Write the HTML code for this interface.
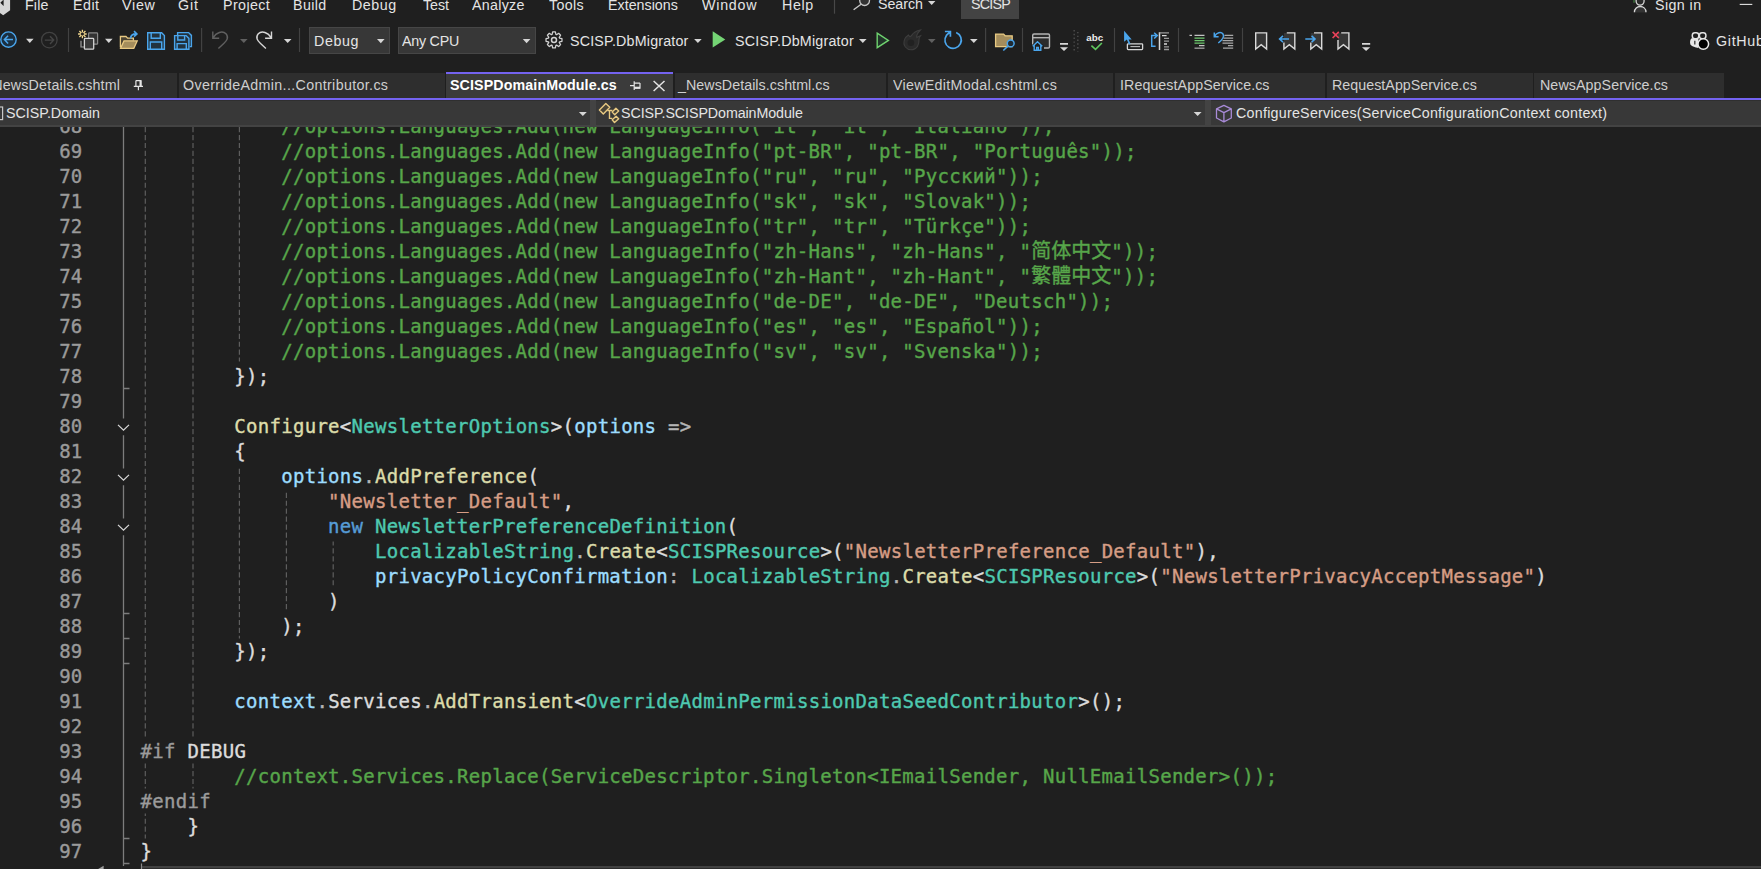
<!DOCTYPE html>
<html lang="en">
<head>
<meta charset="utf-8">
<title>SCISP - SCISPDomainModule.cs</title>
<style>
html,body{margin:0;padding:0;}
body{width:1761px;height:869px;overflow:hidden;background:#1f1f1f;position:relative;
  font-family:"Liberation Sans","Noto Sans CJK SC",sans-serif;font-size:14.5px;color:#e6e6e6;}
/* ---------- editor ---------- */
#editor{position:absolute;left:0;top:127px;width:1761px;height:742px;overflow:hidden;background:#1f1f1f;}
#nums,#code{position:absolute;top:-38.5px;font-family:"DejaVu Sans Mono","Liberation Mono","Noto Sans CJK SC",monospace;
  font-size:19px;letter-spacing:0.28px;-webkit-text-stroke:0.38px;}
#nums{left:0;width:82.6px;text-align:right;color:#9a9a9a;}
#code{left:140.6px;color:#dcdcdc;}
.ln{height:25px;line-height:25px;white-space:pre;}
.c{color:#57a64a}.p{color:#dcdcdc}.o{color:#b4b4b4}.m{color:#dcdcaa}.t{color:#4ec9b0}
.v{color:#9cdcfe}.s{color:#d69d85}.k{color:#569cd6}.i{color:#dcdcdc}.d{color:#9b9b9b}
.cjk{font-family:"Noto Sans CJK SC",sans-serif;font-size:20px;letter-spacing:0;line-height:0;}

/* ---------- top chrome ---------- */
.u{position:absolute;white-space:nowrap;line-height:20px;height:20px;font-size:15.5px;color:#e4e4e4;transform:scaleX(0.92);transform-origin:0 0;}
.tabtx{color:#cfcfcf;}
.tabact{color:#ffffff;font-weight:bold;}
.box{position:absolute;}
#menusel{left:961px;top:0;width:58px;height:18.7px;background:#434343;}
.combo{position:absolute;top:27px;height:24.8px;background:#373737;border:1px solid #464646;box-sizing:content-box;}
#tabrow{position:absolute;left:0;top:73px;width:1761px;height:25px;}
.tab{position:absolute;top:0;height:25px;background:#2e2e2e;}
.tab.act{background:#3b3b3b;top:-1px;height:26px;border-top:2px solid #7463f0;box-sizing:border-box;}
#purple{position:absolute;left:0;top:97.6px;width:1761px;height:2.8px;background:#7463f0;}
#navbar{position:absolute;left:0;top:100.2px;width:1761px;height:26.7px;background:#434343;}
.nav{position:absolute;top:0;height:24.6px;background:#383838;border-top:0.8px solid #2f2f2f;box-sizing:border-box;}
#chrome{position:absolute;left:0;top:0;}
</style>
</head>
<body>

<!-- ================= EDITOR ================= -->
<div id="editor">
<svg id="deco" width="1761" height="742" viewBox="0 127 1761 742" fill="none" style="position:absolute;left:0;top:0">
<path d="M145.3 127.0V738.5" stroke="#5e5e5e" stroke-width="1.2" stroke-dasharray="5.2 2.75" stroke-dashoffset="0.00"/>
<path d="M145.3 763.5V788.5" stroke="#5e5e5e" stroke-width="1.2" stroke-dasharray="5.2 2.75" stroke-dashoffset="0.50"/>
<path d="M145.3 813.5V838.5" stroke="#5e5e5e" stroke-width="1.2" stroke-dasharray="5.2 2.75" stroke-dashoffset="2.80"/>
<path d="M193.0 127.0V738.5" stroke="#5e5e5e" stroke-width="1.2" stroke-dasharray="5.2 2.75" stroke-dashoffset="0.00"/>
<path d="M193.0 763.5V788.5" stroke="#5e5e5e" stroke-width="1.2" stroke-dasharray="5.2 2.75" stroke-dashoffset="0.50"/>
<path d="M239.4 127.0V361.5" stroke="#5e5e5e" stroke-width="1.2" stroke-dasharray="5.2 2.75" stroke-dashoffset="0.00"/>
<path d="M239.4 466.5V638.5" stroke="#5e5e5e" stroke-width="1.2" stroke-dasharray="5.2 2.75" stroke-dashoffset="5.60"/>
<path d="M286.4 491.5V611.5" stroke="#5e5e5e" stroke-width="1.2" stroke-dasharray="5.2 2.75" stroke-dashoffset="6.75"/>
<path d="M333.2 541.5V587.5" stroke="#5e5e5e" stroke-width="1.2" stroke-dasharray="5.2 2.75" stroke-dashoffset="1.10"/>
<path d="M123.5 127.0V418.5M123.5 435.2V468.5M123.5 485.2V518.5M123.5 535.2V866.0M123.5 388.5H129.5M123.5 613.5H129.5M123.5 638.5H129.5M123.5 663.5H129.5M123.5 838.5H129.5M123.5 863.5H129.5" stroke="#7c7c7c" stroke-width="1.3"/>
<path d="M118 424.9L123.5 430.1L129 424.9M118 474.9L123.5 480.1L129 474.9M118 524.9L123.5 530.1L129 524.9" stroke="#d8d8d8" stroke-width="1.25"/>
<rect x="141" y="866" width="1620" height="2" fill="#414141"/>
<rect x="141" y="868" width="1620" height="1" fill="#2c2c2c"/>
<path d="M141.5 863.5V869" stroke="#8a8a8a" stroke-width="1.2"/>
<path d="M103.6 865.8L97.8 869.2L103.6 872Z" fill="#a0a0a0"/>
</svg>
<div id="nums">
<div class="ln">67</div>
<div class="ln">68</div>
<div class="ln">69</div>
<div class="ln">70</div>
<div class="ln">71</div>
<div class="ln">72</div>
<div class="ln">73</div>
<div class="ln">74</div>
<div class="ln">75</div>
<div class="ln">76</div>
<div class="ln">77</div>
<div class="ln">78</div>
<div class="ln">79</div>
<div class="ln">80</div>
<div class="ln">81</div>
<div class="ln">82</div>
<div class="ln">83</div>
<div class="ln">84</div>
<div class="ln">85</div>
<div class="ln">86</div>
<div class="ln">87</div>
<div class="ln">88</div>
<div class="ln">89</div>
<div class="ln">90</div>
<div class="ln">91</div>
<div class="ln">92</div>
<div class="ln">93</div>
<div class="ln">94</div>
<div class="ln">95</div>
<div class="ln">96</div>
<div class="ln">97</div>

</div>
<div id="code">
<div class="ln"></div>
<div class="ln">            <span class="c">//options.Languages.Add(new LanguageInfo("it", "it", "Italiano"));</span></div>
<div class="ln">            <span class="c">//options.Languages.Add(new LanguageInfo("pt-BR", "pt-BR", "Português"));</span></div>
<div class="ln">            <span class="c">//options.Languages.Add(new LanguageInfo("ru", "ru", "Русский"));</span></div>
<div class="ln">            <span class="c">//options.Languages.Add(new LanguageInfo("sk", "sk", "Slovak"));</span></div>
<div class="ln">            <span class="c">//options.Languages.Add(new LanguageInfo("tr", "tr", "Türkçe"));</span></div>
<div class="ln">            <span class="c">//options.Languages.Add(new LanguageInfo("zh-Hans", "zh-Hans", "<span class="cjk">简体中文</span>"));</span></div>
<div class="ln">            <span class="c">//options.Languages.Add(new LanguageInfo("zh-Hant", "zh-Hant", "<span class="cjk">繁體中文</span>"));</span></div>
<div class="ln">            <span class="c">//options.Languages.Add(new LanguageInfo("de-DE", "de-DE", "Deutsch"));</span></div>
<div class="ln">            <span class="c">//options.Languages.Add(new LanguageInfo("es", "es", "Español"));</span></div>
<div class="ln">            <span class="c">//options.Languages.Add(new LanguageInfo("sv", "sv", "Svenska"));</span></div>
<div class="ln">        <span class="p">});</span></div>
<div class="ln"></div>
<div class="ln">        <span class="m">Configure</span><span class="p">&lt;</span><span class="t">NewsletterOptions</span><span class="p">&gt;(</span><span class="v">options</span> <span class="o">=&gt;</span></div>
<div class="ln">        <span class="p">{</span></div>
<div class="ln">            <span class="v">options</span><span class="o">.</span><span class="m">AddPreference</span><span class="p">(</span></div>
<div class="ln">                <span class="s">"Newsletter_Default"</span><span class="p">,</span></div>
<div class="ln">                <span class="k">new</span> <span class="t">NewsletterPreferenceDefinition</span><span class="p">(</span></div>
<div class="ln">                    <span class="t">LocalizableString</span><span class="o">.</span><span class="m">Create</span><span class="p">&lt;</span><span class="t">SCISPResource</span><span class="p">&gt;(</span><span class="s">"NewsletterPreference_Default"</span><span class="p">),</span></div>
<div class="ln">                    <span class="v">privacyPolicyConfirmation</span><span class="o">:</span> <span class="t">LocalizableString</span><span class="o">.</span><span class="m">Create</span><span class="p">&lt;</span><span class="t">SCISPResource</span><span class="p">&gt;(</span><span class="s">"NewsletterPrivacyAcceptMessage"</span><span class="p">)</span></div>
<div class="ln">                <span class="p">)</span></div>
<div class="ln">            <span class="p">);</span></div>
<div class="ln">        <span class="p">});</span></div>
<div class="ln"></div>
<div class="ln">        <span class="v">context</span><span class="o">.</span><span class="i">Services</span><span class="o">.</span><span class="m">AddTransient</span><span class="p">&lt;</span><span class="t">OverrideAdminPermissionDataSeedContributor</span><span class="p">&gt;();</span></div>
<div class="ln"></div>
<div class="ln"><span class="d">#if</span> <span class="i">DEBUG</span></div>
<div class="ln">        <span class="c">//context.Services.Replace(ServiceDescriptor.Singleton&lt;IEmailSender, NullEmailSender&gt;());</span></div>
<div class="ln"><span class="d">#endif</span></div>
<div class="ln">    <span class="p">}</span></div>
<div class="ln"><span class="p">}</span></div>

</div>
</div>


<!-- ================= MENU / TOOLBAR / TABS ================= -->
<div id="menusel" class="box"></div>
<div class="combo" style="left:309px;width:79px;"></div>
<div class="combo" style="left:398px;width:135.6px;"></div>

<div id="tabrow">
  <div class="tab" style="left:0;width:177px;"></div>
  <div class="tab" style="left:178.6px;width:266.4px;"></div>
  <div class="tab act" style="left:446px;width:227px;"></div>
  <div class="tab" style="left:674.6px;width:211.6px;"></div>
  <div class="tab" style="left:887.8px;width:225.2px;"></div>
  <div class="tab" style="left:1114.8px;width:210.2px;"></div>
  <div class="tab" style="left:1326.6px;width:206px;"></div>
  <div class="tab" style="left:1534.4px;width:189.6px;"></div>
</div>
<div id="purple"></div>
<div id="navbar">
  <div class="nav" style="left:0;width:590.4px;"></div>
  <div class="nav" style="left:596px;width:609px;"></div>
  <div class="nav" style="left:1210.6px;width:550.4px;"></div>
</div>

<div class="u" style="left:25.0px;top:-5.4px;letter-spacing:0.155px">File</div>
<div class="u" style="left:73.1px;top:-5.4px;letter-spacing:0.537px">Edit</div>
<div class="u" style="left:122.2px;top:-5.4px;letter-spacing:0.814px">View</div>
<div class="u" style="left:178.1px;top:-5.4px;letter-spacing:0.916px">Git</div>
<div class="u" style="left:222.7px;top:-5.4px;letter-spacing:0.430px">Project</div>
<div class="u" style="left:293.1px;top:-5.4px;letter-spacing:0.423px">Build</div>
<div class="u" style="left:352.4px;top:-5.4px;letter-spacing:0.592px">Debug</div>
<div class="u" style="left:422.7px;top:-5.4px;letter-spacing:-0.029px">Test</div>
<div class="u" style="left:471.6px;top:-5.4px;letter-spacing:0.312px">Analyze</div>
<div class="u" style="left:548.8px;top:-5.4px;letter-spacing:0.340px">Tools</div>
<div class="u" style="left:607.7px;top:-5.4px;letter-spacing:0.010px">Extensions</div>
<div class="u" style="left:701.9px;top:-5.4px;letter-spacing:0.838px">Window</div>
<div class="u" style="left:782.0px;top:-5.4px;letter-spacing:0.684px">Help</div>
<div class="u" style="left:877.6px;top:-6.4px;letter-spacing:-0.043px">Search</div>
<div class="u" style="left:970.5px;top:-5.8px;letter-spacing:-0.791px">SCISP</div>
<div class="u" style="left:1654.5px;top:-5.4px;letter-spacing:0.457px">Sign in</div>
<div class="u" style="left:313.7px;top:30.6px;letter-spacing:0.679px">Debug</div>
<div class="u" style="left:402.2px;top:30.6px;letter-spacing:-0.248px">Any CPU</div>
<div class="u" style="left:569.8px;top:30.6px;letter-spacing:0.211px">SCISP.DbMigrator</div>
<div class="u" style="left:734.6px;top:30.6px;letter-spacing:0.232px">SCISP.DbMigrator</div>
<div class="u" style="left:1715.7px;top:31.1px;letter-spacing:0.755px">GitHub</div>
<div class="u tabtx" style="left:-16.4px;top:74.8px;letter-spacing:0.223px">_NewsDetails.cshtml</div>
<div class="u tabtx" style="left:183.2px;top:74.8px;letter-spacing:0.376px">OverrideAdmin...Contributor.cs</div>
<div class="u tabact" style="left:450.0px;top:74.8px;letter-spacing:0.110px">SCISPDomainModule.cs</div>
<div class="u tabtx" style="left:678.2px;top:74.8px;letter-spacing:0.054px">_NewsDetails.cshtml.cs</div>
<div class="u tabtx" style="left:892.5px;top:74.8px;letter-spacing:0.317px">ViewEditModal.cshtml.cs</div>
<div class="u tabtx" style="left:1119.6px;top:74.8px;letter-spacing:0.069px">IRequestAppService.cs</div>
<div class="u tabtx" style="left:1331.7px;top:74.8px;letter-spacing:0.037px">RequestAppService.cs</div>
<div class="u tabtx" style="left:1539.8px;top:74.8px;letter-spacing:0.080px">NewsAppService.cs</div>
<div class="u" style="left:5.7px;top:103.3px;letter-spacing:-0.009px">SCISP.Domain</div>
<div class="u" style="left:620.6px;top:103.3px;letter-spacing:-0.088px">SCISP.SCISPDomainModule</div>
<div class="u" style="left:1235.5px;top:103.3px;letter-spacing:0.276px">ConfigureServices(ServiceConfigurationContext context)</div>


<svg id="chrome" width="1761" height="130" viewBox="0 0 1761 130" fill="none" stroke-linecap="butt" stroke-linejoin="miter">
<path d="M0 0H10.1V10.3L3.2 15.2L0 13Z" fill="#d6d6d6"/><path d="M0.3 2.8L3.6 -0.4V6Z" fill="#1f1f1f"/>
<path d="M834.5 0.0V13.7" stroke="#484848" stroke-width="1.2"/>
<circle cx="864.6" cy="0.6" r="4.9" stroke="#c8c8c8" stroke-width="1.3" fill="#333"/><path d="M861.1 4.3L853.6 9.7" stroke="#c8c8c8" stroke-width="1.4"/>
<path d="M928 1h7.4l-3.7 4z" fill="#d6d6d6"/>
<path d="M1634.4 12.4C1634.4 4.6 1646 4.6 1646 12.4Z" fill="#333"/><path d="M1634.4 12.2C1634.4 4.6 1646 4.6 1646 12.2" stroke="#d8d8d8" stroke-width="1.3"/>
<circle cx="1640.1" cy="1.1" r="4" fill="#2a2a2a" stroke="#d8d8d8" stroke-width="1.3"/>
<path d="M1634 0V2.8" stroke="#4fae4f" stroke-width="0.8"/>
<path d="M1739.7 4.4H1752.3" stroke="#e4e4e4" stroke-width="1.1"/>
<circle cx="8.5" cy="39.6" r="7.7" fill="#1b2f40" stroke="#4aa5ec" stroke-width="1.4"/>
<path d="M13 39.6H4.8M8.1 35.8L4.4 39.6L8.1 43.4" stroke="#4aa5ec" stroke-width="1.5"/>
<path d="M26.0 38.8h7.6l-3.8 4.2z" fill="#d6d6d6"/>
<circle cx="49.3" cy="40.1" r="7.8" stroke="#424242" stroke-width="1.3"/>
<path d="M44.8 40.1H53.2M50 36.3L53.7 40.1L50 43.9" stroke="#454545" stroke-width="1.4"/>
<path d="M68.5 28.0V52.0" stroke="#424242" stroke-width="1.2"/>
<rect x="88.6" y="32.9" width="9" height="11.3" rx="0.8" fill="#333" stroke="#8a8a8a" stroke-width="1.2"/>
<path d="M81 40.8V47H84" stroke="#a0a0a0" stroke-width="1.2"/>
<rect x="84.4" y="38.4" width="9.3" height="10.8" rx="0.8" fill="#3b3b3b" stroke="#d4d4d4" stroke-width="1.3"/>
<path d="M83.90 34.00L86.70 34.00M83.46 35.06L85.44 37.04M82.40 35.50L82.40 38.30M81.34 35.06L79.36 37.04M80.90 34.00L78.10 34.00M81.34 32.94L79.36 30.96M82.40 32.50L82.40 29.70M83.46 32.94L85.44 30.96" stroke="#f3d88e" stroke-width="1.3"/>
<path d="M105.0 38.8h7.6l-3.8 4.2z" fill="#d6d6d6"/>
<path d="M120.4 47.6V36.5H126L127.6 38.1H133.4V40.6" fill="#4a4232" stroke="#e8c982" stroke-width="1.3"/>
<path d="M120.6 48.3L124 40.9H137.2L133.8 48.3Z" fill="#a48d5c" stroke="#e8c982" stroke-width="1.3"/>
<path d="M130.6 38.6C130.6 35.2 133 33.9 136.2 33.9M134 31.2L136.9 33.9L134 36.6" stroke="#4aa5ec" stroke-width="1.6"/>
<path d="M147.7 32.8H161.6L164.4 35.6V49.3H147.7Z" fill="#22323e" stroke="#4aa5ec" stroke-width="1.4"/>
<path d="M151.2 32.8V38.3H160.3V32.8M150.3 49.3V42H161.7V49.3" stroke="#4aa5ec" stroke-width="1.4"/>
<path d="M177.6 35V32.6H188.6L191.4 35.4V46.6H189.6" fill="#22323e" stroke="#4aa5ec" stroke-width="1.4"/>
<path d="M174.6 35.6H186.1L188.9 38.4V49.3H174.6Z" fill="#22323e" stroke="#4aa5ec" stroke-width="1.4"/>
<path d="M177.8 35.6V40H184.6V35.6M177.1 49.3V43.6H186.3V49.3" stroke="#4aa5ec" stroke-width="1.4"/>
<path d="M201.6 28.0V52.0" stroke="#424242" stroke-width="1.2"/>
<path d="M212.8 31.6V38.3H219.2M213.3 37.8C216 32.5 222.5 30.2 226 33.8C229.3 37.5 226.5 41 224 43.2L218.4 48.4" stroke="#606060" stroke-width="1.4"/>
<path d="M240.0 38.9h7.6l-3.8 4.2z" fill="#606060"/>
<path d="M212.8 31.6V38.3H219.2M213.3 37.8C216 32.5 222.5 30.2 226 33.8C229.3 37.5 226.5 41 224 43.2L218.4 48.4" stroke="#d6d6d6" stroke-width="1.4" transform="translate(484.3,0) scale(-1,1)"/>
<path d="M283.9 38.9h7.6l-3.8 4.2z" fill="#d6d6d6"/>
<path d="M299.5 28.0V52.0" stroke="#424242" stroke-width="1.2"/>
<path d="M377.0 39.1h7.6l-3.8 4.2z" fill="#d6d6d6"/>
<path d="M522.8 39.1h7.6l-3.8 4.2z" fill="#d6d6d6"/>
<path d="M552.12 34.41L552.63 31.92L555.37 31.92L555.88 34.41L556.55 34.69L558.68 33.29L560.61 35.22L559.21 37.35L559.49 38.02L561.98 38.53L561.98 41.27L559.49 41.78L559.21 42.45L560.61 44.58L558.68 46.51L556.55 45.11L555.88 45.39L555.37 47.88L552.63 47.88L552.12 45.39L551.45 45.11L549.32 46.51L547.39 44.58L548.79 42.45L548.51 41.78L546.02 41.27L546.02 38.53L548.51 38.02L548.79 37.35L547.39 35.22L549.32 33.29L551.45 34.69Z" stroke="#d2d2d2" stroke-width="1.25" stroke-linejoin="round"/>
<circle cx="554.0" cy="39.9" r="2.5" stroke="#d2d2d2" stroke-width="1.5"/>
<path d="M694.1 38.9h7.6l-3.8 4.2z" fill="#d6d6d6"/>
<path d="M712.7 31.2L725.3 39.4L712.7 47.6Z" fill="#74d474"/>
<path d="M859.0 38.9h7.6l-3.8 4.2z" fill="#d6d6d6"/>
<path d="M877.2 33.2L888.4 40.4L877.2 47.7Z" fill="#22352a" stroke="#6fd26f" stroke-width="1.4"/>
<path d="M920.4 30C916.5 30.8 913 33.2 911.6 35.4C911 36.3 910.4 36.9 909.9 36.8C909.3 36.5 909 35.6 908.5 35C906.5 36.4 905.3 37.6 904.6 39.4C903.6 42 903.9 45 905.4 47C907 49 909 49.8 911 49.8C913.6 49.8 916 48.6 917.5 46.4C918.6 44.6 919.1 42 919 39.6C919 38 919.5 36.8 920.4 35.8C918.8 36.2 917.6 37 916.8 37.6C916.5 36.2 916.8 35 917.5 33.8C918.2 32.4 919.2 31.2 920.4 30Z" fill="#2b2b2b" stroke="#3d3d3d" stroke-width="1.1"/>
<circle cx="910.9" cy="42.8" r="3.3" fill="#212121"/>
<path d="M928.0 38.9h7.6l-3.8 4.2z" fill="#606060"/>
<path d="M950.3 31.7L946.4 35.4A8.2 8.2 0 1 0 956.2 32.5M944.9 31.5H950.4V36.8" stroke="#4aa5ec" stroke-width="1.7"/>
<path d="M970.0 38.9h7.6l-3.8 4.2z" fill="#d6d6d6"/>
<path d="M985.6 28.0V52.0" stroke="#424242" stroke-width="1.2"/>
<path d="M995.6 34.1H1003.6L1005.1 35.8H1012.2V46.6H995.6Z" fill="#a38c5c" stroke="#e8c982" stroke-width="1.3"/>
<path d="M1008.2 45.9L1003.3 50.5" stroke="#4aa5ec" stroke-width="1.6"/><circle cx="1010.7" cy="43.4" r="3.4" fill="#1f2a33" stroke="#4aa5ec" stroke-width="1.5"/>
<path d="M1022.5 28.0V52.0" stroke="#424242" stroke-width="1.2"/>
<rect x="1032.7" y="34" width="16.8" height="14" rx="1.3" fill="#2b2b2b" stroke="#b4b4b4" stroke-width="1.4"/><path d="M1032.7 37.7H1049.5" stroke="#b4b4b4" stroke-width="1.4"/>
<path d="M1031 51.4V45.8L1037.5 40L1044 45.8V51.4Z" fill="#1f1f1f"/>
<path d="M1032.7 46.3L1037.5 41.8L1042.3 46.3M1034.2 45.2V50.3H1040.8V45.2M1036.7 50.3V47.4H1038.3V50.3" stroke="#4aa5ec" stroke-width="1.4"/>
<path d="M1060 43h8v1.8h-8zM1060 47.2h8l-4 3.8z" fill="#d6d6d6"/>
<path d="M1074.2 30V51.5M1077.8 31.9V51.5" stroke="#484848" stroke-width="1.6" stroke-dasharray="1.4 2.4"/>
<text x="1086.3" y="41" style="font-family:'Liberation Sans',sans-serif;font-weight:bold;font-size:9.8px" fill="#ececec" stroke="none">abc</text>
<path d="M1091.4 45.7L1095.5 49.4L1101.9 43" stroke="#5fc85f" stroke-width="1.6"/>
<path d="M1114.5 28.0V52.0" stroke="#424242" stroke-width="1.2"/>
<rect x="1127.4" y="43.8" width="15.2" height="5.8" rx="0.8" fill="#1f1f1f" stroke="#d6d6d6" stroke-width="1.3"/><path d="M1130.4 46.6H1140" stroke="#bdbdbd" stroke-width="1.1"/>
<path d="M1124.1 30.8V41.8L1126.9 39.6L1128.9 44.4L1130.5 43.7L1128.6 39.4H1131.7Z" fill="#4aa5ec"/>
<path d="M1156.6 35.6H1151.7V46.2H1155.6M1154.2 32.7L1157.3 35.6L1154.2 38.5" stroke="#4aa5ec" stroke-width="1.5"/>
<path d="M1159.5 32.2V50" stroke="#d8d8d8" stroke-width="1.5"/>
<path d="M1159.5 32.8H1169M1164 38.4H1169M1164 41.2H1169M1164 46.8H1169M1164 49.5H1169" stroke="#9a9a9a" stroke-width="1.3"/>
<path d="M1162 35.6H1166.6M1164 44H1167" stroke="#dcdcdc" stroke-width="1.3"/>
<path d="M1178.5 28.0V52.0" stroke="#424242" stroke-width="1.2"/>
<path d="M1189.5 35.4H1192M1194.5 35.4H1204.5M1199 45.6H1204.5" stroke="#c4c4c4" stroke-width="1.2"/>
<path d="M1194.5 38.1H1204.5M1194.5 40.6H1204.5M1194.5 43.1H1204.5" stroke="#6fc96f" stroke-width="1.25"/>
<path d="M1194.5 48.2H1204.5" stroke="#9a9a9a" stroke-width="1.4"/>
<path d="M1214.3 32.4V36.7H1218.6M1214.6 36.3C1216.5 32.4 1221 31.4 1223 34C1225 37 1222 40 1218.3 43" stroke="#4aa5ec" stroke-width="1.5"/>
<path d="M1224.5 35.4H1233.2M1223.5 38.1H1233.2M1222.5 40.6H1233.2M1222.5 43.1H1233.2M1228 45.6H1233.2M1223 48.2H1233.2" stroke="#a8a8a8" stroke-width="1.3"/>
<path d="M1242.5 28.0V52.0" stroke="#424242" stroke-width="1.2"/>
<path d="M1255.7 32.9H1266.6V49L1261.2 44.6L1255.7 49Z" fill="#363636" stroke="#dadada" stroke-width="1.4"/>
<path d="M1283.9 32.9H1294.8V49L1289.4 44.6L1283.9 49Z" fill="#363636"/>
<path d="M1310.8 32.9H1321.7V49L1316.2 44.6L1310.8 49Z" fill="#363636"/>
<path d="M1338.0 32.9H1348.9V49L1343.5 44.6L1338.0 49Z" fill="#363636"/>
<path d="M1286.8 32.9H1294.8V49L1289.35 44.6L1283.9 49V42.6" stroke="#dadada" stroke-width="1.4"/>
<path d="M1289 39H1279.9M1283 35.8L1279.6 39L1283 42.2" stroke="#4aa5ec" stroke-width="1.6"/>
<path d="M1314 32.9H1321.7V49L1316.25 44.6L1310.8 49V42.6" stroke="#dadada" stroke-width="1.4"/>
<path d="M1305.3 39H1314.7M1311.6 35.8L1315 39L1311.6 42.2" stroke="#4aa5ec" stroke-width="1.6"/>
<path d="M1341.2 32.9H1348.9V49L1343.45 44.6L1338 49V40" stroke="#dadada" stroke-width="1.4"/>
<path d="M1332.6 31.9L1338.8 38M1338.8 31.9L1332.6 38" stroke="#e8425a" stroke-width="1.7"/>
<path d="M1362 43h8.2v1.8h-8.2zM1362 47.2h8.2l-4.1 3.7z" fill="#d6d6d6"/>
<path d="M1691.6 38.2C1689.6 40 1689.9 43.6 1690.6 44.8C1692.2 46.6 1695 47.6 1698.4 47.9V38.2Z" fill="#e8e8e8"/>
<rect x="1692.3" y="32.7" width="6.5" height="6" rx="2.6" fill="#1f1f1f" stroke="#e4e4e4" stroke-width="1.5"/><rect x="1699.4" y="32.7" width="6.5" height="6" rx="2.6" fill="#1f1f1f" stroke="#e4e4e4" stroke-width="1.5"/>
<path d="M1694.8 40.8V44.4" stroke="#444" stroke-width="1.4"/>
<circle cx="1703.3" cy="44" r="5.3" fill="#000" stroke="#e8e8e8" stroke-width="1.5"/>
<path d="M135.9 80.6H140.9V86.3M135.9 80.6V86.3M133.8 86.4H143M138.4 86.4V90.3" stroke="#e4e4e4" stroke-width="1.2"/><path d="M140.5 80.6V86.3" stroke="#e4e4e4" stroke-width="2"/>
<path d="M640 83.1V88.1H634.3M640 83.1H634.3M634.2 81.2V89.9M634.2 85.6H630" stroke="#e4e4e4" stroke-width="1.2"/><path d="M640 87.7H634.3" stroke="#e4e4e4" stroke-width="2"/>
<path d="M653.6 81L664.5 91M664.5 81L653.6 91" stroke="#e4e4e4" stroke-width="1.5"/>
<rect x="-4" y="107" width="6.6" height="12.6" stroke="#c8c8c8" stroke-width="1.2"/>
<path d="M578.9 111.9h7.9l-3.95 4.1z M1193.7 111.9h7.9l-3.95 4.1z" fill="#d6d6d6"/>
<path d="M607.3 110.5H612.4M609.5 110.5V118.4H612.2" stroke="#e8c982" stroke-width="1.4"/>
<path d="M605.8 103.4L609.8 107.3L603.3 113.9L599.4 110.0Z" fill="#4a4538" stroke="#e8c982" stroke-width="1.4" stroke-linejoin="round"/>
<path d="M615.9 108.3L618.7 111.1L614.7 114.8L612.2 112.1ZM616.1 116.3L618.7 118.7L614.5 122.6L612.2 119.8Z" fill="#4a4538" stroke="#e8c982" stroke-width="1.4" stroke-linejoin="round"/>
<path d="M1223.9 105.3L1231.3 108.9V118L1223.9 121.8L1216.5 118V108.9ZM1216.5 108.9L1223.9 112.7L1231.3 108.9M1223.9 112.7V121.8" stroke="#a98bd8" stroke-width="1.3" stroke-linejoin="round"/>
</svg>
</body>
</html>
